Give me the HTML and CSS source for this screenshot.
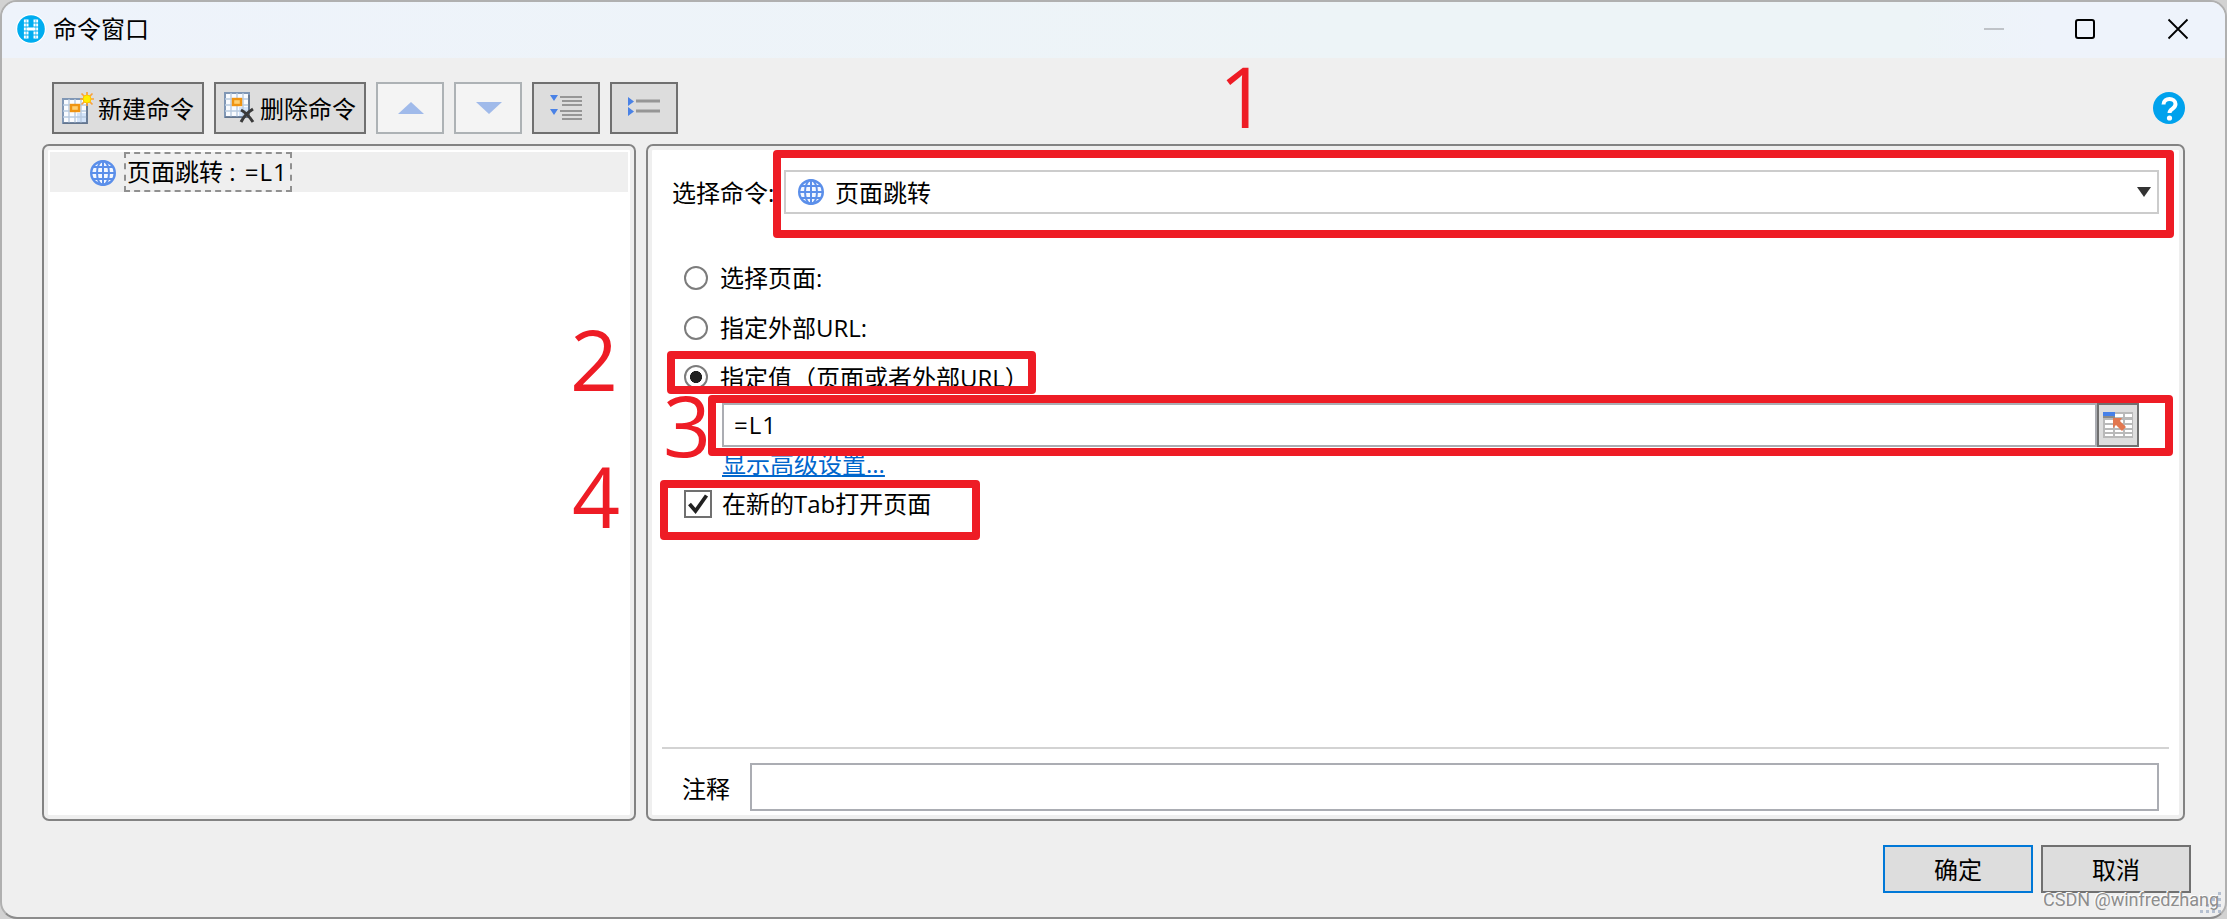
FILE: index.html
```html
<!DOCTYPE html>
<html lang="zh-CN">
<head>
  <meta charset="UTF-8">
  <meta name="viewport" content="width=device-width, initial-scale=1.0">
  <title>命令窗口</title>
  <link rel="stylesheet" href="styles.css">
</head>
<body>
  <!-- shared icon shapes -->
  <svg class="defs" width="0" height="0">
    <symbol id="globe" viewBox="0 0 28 28">
      <circle cx="14" cy="14" r="11.8" fill="#f4f8ff" stroke="#5b8fea" stroke-width="2.4"/>
      <g fill="none" stroke="#5b8fea" stroke-width="2">
        <ellipse cx="14" cy="14" rx="6" ry="12"/>
        <path d="M14 2v24M2 14h24M4 8h20M4 20h20"/>
      </g>
    </symbol>
    <symbol id="sheet" viewBox="0 0 26 26">
      <rect x="1" y="1" width="24" height="24" fill="#fafcff" stroke="#8097b5" stroke-width="2"/>
      <path d="M15 15h9v9h-9z" fill="#d3e4fa"/>
      <path d="M7 1v24M13 1v24M19 1v24M1 7h24M1 13h24M1 19h24" stroke="#b8cae0" stroke-width="1.4"/>
      <path d="M1 25.2h24V3" fill="none" stroke="#63758d" stroke-width="1.6"/>
      <rect x="9" y="7" width="8" height="6" fill="#ffcf70" stroke="#ef9412" stroke-width="2.4"/>
    </symbol>
  </svg>

  <div class="window">
    <div class="titlebar">
      <svg class="logo" width="30" height="30" viewBox="0 0 30 30">
        <circle cx="15" cy="15" r="15" fill="#fff"/>
        <circle cx="15" cy="15" r="13.8" fill="#00adf0"/>
        <path d="M10.2 5.500v19M19.8 5.500v19" stroke="#fff" stroke-width="4.6" stroke-dasharray="3 1"/>
        <path d="M12 15h6" stroke="#fff" stroke-width="3"/>
        <path d="M10.2 6v18M19.8 6v18" stroke="#00adf0" stroke-width=".6"/>
      </svg>
      <span class="title">命令窗口</span>
      <svg class="controls" width="206" height="24" viewBox="0 0 206 24" fill="none" stroke="#000" stroke-width="2">
        <path d="M0 12h20" stroke="#bfc3c8"/>
        <rect x="92" y="3" width="18" height="18" rx="2"/>
        <path d="M184.500 2.500l19 19M203.500 2.500l-19 19" stroke-width="1.8"/>
      </svg>
    </div>

    <div class="toolbar">
      <button class="tool text">
        <svg width="32" height="32" viewBox="0 0 32 32">
          <use href="#sheet" x="0" y="6" width="26" height="26"/>
          <g stroke="#f9a13a" stroke-width="1.7">
            <path d="M25 0v14M18 7h14M19.500 1.500l11 11M30.500 1.500l-11 11"/>
          </g>
          <circle cx="25" cy="7" r="4" fill="#ffef00" stroke="#ffc400"/>
        </svg>
        <span>新建命令</span>
      </button>
      <button class="tool text">
        <svg width="32" height="32" viewBox="0 0 32 32">
          <use href="#sheet" x="0" y="0" width="26" height="26"/>
          <path d="M17 18q6 3 12 12M29 17q-8 5-12 13" fill="none" stroke="#3a3a3a" stroke-width="3"/>
        </svg>
        <span>删除命令</span>
      </button>
      <button class="tool disabled">
        <svg width="32" height="32" viewBox="0 0 32 32"><path d="M4 22h26L17 10z" fill="#a0baea"/></svg>
      </button>
      <button class="tool disabled">
        <svg width="32" height="32" viewBox="0 0 32 32"><path d="M4 10h26L17 22z" fill="#a0baea"/></svg>
      </button>
      <button class="tool">
        <svg width="32" height="32" viewBox="0 0 32 32">
          <path d="M0 3h8l-4 6zM0 17h8l-4 6z" fill="#4a82e6"/>
          <path d="M10 5h22M12 9h20M12 13h20M10 19h22M12 23h20M12 27h20" stroke="#969696" stroke-width="2.2"/>
        </svg>
      </button>
      <button class="tool">
        <svg width="32" height="32" viewBox="0 0 32 32">
          <path d="M0 5l6 4.500L0 14zM0 15l6 4.500L0 24z" fill="#4a82e6"/>
          <path d="M8 9h24M8 19h24" stroke="#969696" stroke-width="2.8"/>
        </svg>
      </button>
      <svg class="help" width="32" height="32" viewBox="0 0 32 32">
        <circle cx="16" cy="16" r="16" fill="#00a2ed"/>
        <path d="M10.500 12.500c0-7.500 12-7 12-.5 0 5-6 4.500-6 9" fill="none" stroke="#fff" stroke-width="4"/>
        <circle cx="16.500" cy="26" r="2.600" fill="#fff"/>
      </svg>
    </div>

    <div class="main">
      <div class="panel list">
        <div class="list-row">
          <svg width="28" height="28"><use href="#globe"/></svg>
          <span class="item">页面跳转 : <span class="formula">=L1</span></span>
        </div>
      </div>

      <div class="panel detail">
        <div class="command">
          <span class="label">选择命令:</span>
          <div class="combo">
            <svg width="28" height="28"><use href="#globe"/></svg>
            <span>页面跳转</span>
            <svg class="arrow" width="14" height="10" viewBox="0 0 14 10"><path d="M0 0h14L7 10z" fill="#333"/></svg>
          </div>
        </div>

        <div class="options">
          <label class="option"><i class="radio"></i>选择页面:</label>
          <label class="option"><i class="radio"></i>指定外部URL:</label>
          <label class="option"><i class="radio checked"></i>指定值（页面或者外部URL）</label>
        </div>
        <div class="value">
          <div class="value-input"><span class="formula">=L1</span></div>
          <button class="picker">
            <svg width="30" height="26" viewBox="0 0 30 26">
              <rect width="30" height="26" fill="#b9b9b9"/>
              <path d="M2 8h8v3H2zM12 2h8v3h-8zM22 2h7v3h-7zM12 8h8v3h-8zM22 8h7v3h-7zM2 13h8v3H2zM12 13h8v3h-8zM22 13h7v3h-7zM2 18h8v2H2zM12 18h8v2h-8zM22 18h7v2h-7zM2 22h8v2H2zM12 22h8v2h-8zM22 22h7v2h-7z" fill="#fff"/>
              <path d="M0 0h12v4H0z" fill="#4680e8"/>
              <path d="M0 4h12v2H0z" fill="#8a8a8a"/>
              <path d="M10 6h9l-2 3 6 6-4 4-6-6-3 3z" fill="#e27850"/>
            </svg>
          </button>
        </div>
        <a class="advanced">显示高级设置...</a>
        <label class="newtab">
          <svg width="28" height="28" viewBox="0 0 28 28">
            <rect x="1" y="1" width="26" height="26" fill="#fff" stroke="#707070" stroke-width="2"/>
            <path d="M5.500 14l6 7L22.500 5.500" fill="none" stroke="#212121" stroke-width="3.800"/>
          </svg>
          在新的Tab打开页面
        </label>

        <div class="note">
          <span>注释</span>
          <div class="note-input"></div>
        </div>
      </div>
    </div>

    <div class="footer">
      <button class="btn primary">确定</button>
      <button class="btn">取消</button>
    </div>

    <svg class="grip" width="24" height="24" viewBox="0 0 24 24" fill="#b4bfd0">
      <path d="M19 1h3v3h-3zM13 7h3v3h-3zM19 7h3v3h-3zM7 13h3v3H7zM13 13h3v3h-3zM19 13h3v3h-3zM1 19h3v3H1zM7 19h3v3H7zM13 19h3v3h-3zM19 19h3v3h-3z"/>
    </svg>
  </div>

  <!-- step markers -->
  <span class="step step1">1</span>
  <span class="step step2">2</span>
  <span class="step step3">3</span>
  <span class="step step4">4</span>
  <div class="mark mark1"></div>
  <div class="mark mark2"></div>
  <div class="mark mark3"></div>
  <div class="mark mark4"></div>
  <span class="watermark">CSDN @winfredzhang</span>
</body>
</html>
```

FILE: styles.css
```css
* {
  box-sizing: border-box;
}
body {
  margin: 0;
  width: 2227px;
  height: 919px;
  position: relative;
  overflow: hidden;
  background: #d2d2d2;
  font-family: "Open Sans", "Noto Sans CJK SC", sans-serif;
  font-size: 24px;
  line-height: 32px;
  color: #000;
}
.defs {
  position: absolute;
}
svg {
  display: block;
  flex: none;
}
button {
  font: inherit;
  color: inherit;
  padding: 2px 0 0;
  border: 2px solid #707070;
  background: #ddd;
}
.window {
  height: 919px;
  display: flex;
  flex-direction: column;
  background: #efefef;
  border: 2px solid #b0b0b0;
  border-bottom-color: #8c8c8c;
  border-radius: 17px;
  overflow: hidden;
}

/* title bar */
.titlebar {
  height: 56px;
  flex: none;
  display: flex;
  align-items: center;
  padding: 0 35px 2px 14px;
  background: linear-gradient(90deg, #eef3fb, #edf4f7 60%, #edf4f7 86%, #eef3fb 92%);
}
.title {
  margin-left: 7px;
}
.controls {
  margin-left: auto;
}

/* toolbar */
.toolbar {
  display: flex;
  align-items: center;
  gap: 10px;
  padding: 24px 40px 10px 50px;
}
.tool {
  width: 68px;
  height: 52px;
  padding: 0;
  display: flex;
  align-items: center;
  justify-content: center;
}
.tool.text {
  width: 152px;
  justify-content: flex-start;
  padding-left: 8px;
  gap: 4px;
}
.tool span {
  padding-top: 1px;
}
.tool.disabled {
  background: #f4f4f4;
  border-color: #adb2b5;
}
.help {
  margin-left: auto;
}

/* panels */
.main {
  display: flex;
  gap: 10px;
  height: 677px;
  padding: 0 40px;
}
.panel {
  border: 2px solid #838383;
  border-radius: 7px;
  background: #fff;
  box-shadow: inset 0 0 0 4px #efefef;
  padding: 4px;
}
.list {
  width: 594px;
}
.list-row {
  height: 40px;
  margin: 2px;
  padding-left: 39px;
  display: flex;
  align-items: center;
  background: #efefef;
}
.list-row svg {
  margin-top: 2px;
}
.item {
  height: 40px;
  width: 168px;
  margin-left: 7px;
  padding: 2px 0 0 1px;
  border: 2px dashed #909090;
  white-space: nowrap;
}
.item .formula {
  margin-left: 3px;
}
.formula {
  letter-spacing: 1px;
}
.detail {
  flex: 1;
  display: flex;
  flex-direction: column;
}
.command {
  display: flex;
  align-items: center;
  margin: 20px 20px 0;
}
.label {
  width: 112px;
  flex: none;
  padding-top: 2px;
}
.combo {
  flex: 1;
  height: 44px;
  display: flex;
  align-items: center;
  border: 2px solid #ccc;
  padding: 0 6px 0 11px;
}
.combo span {
  margin-left: 10px;
  padding-top: 1px;
}
.arrow {
  margin-left: auto;
}
.options {
  margin: 39px 0 0 32px;
}
.option {
  height: 50px;
  display: flex;
  align-items: center;
}
.radio {
  width: 24px;
  height: 24px;
  margin-right: 12px;
  border: 2px solid #7c7c7c;
  border-radius: 50%;
}
.radio.checked {
  margin-top: -2px;
  background: radial-gradient(circle, #212121 5.7px, #fff 6.3px);
}
.value {
  display: flex;
  height: 44px;
  margin: 0 40px 0 70px;
}
.value-input {
  flex: 1;
  border: 2px solid #abadb3;
  padding: 4px 10px;
}
.picker {
  width: 42px;
  padding: 0 0 0 4px;
}
.advanced {
  align-self: flex-start;
  height: 36px;
  margin-left: 70px;
  line-height: 33px;
  color: #0066cc;
  text-decoration: underline;
}
.newtab {
  display: flex;
  align-items: center;
  gap: 10px;
  height: 28px;
  margin: 7px 0 0 32px;
}
.note {
  display: flex;
  align-items: center;
  margin: auto 10px 0;
  padding: 14px 10px 4px 20px;
  border-top: 2px solid #d3d3d3;
}
.note span {
  padding-top: 3px;
}
.note-input {
  flex: 1;
  height: 48px;
  margin-left: 20px;
  border: 2px solid #abadb3;
}

/* dialog buttons */
.footer {
  display: flex;
  justify-content: flex-end;
  gap: 8px;
  padding: 24px 34px 0 0;
}
.btn {
  width: 150px;
  height: 48px;
}
.btn.primary {
  border-color: #0078d7;
}
.grip {
  position: absolute;
  right: 4px;
  bottom: 4px;
}

/* step markers laid over the window */
.mark {
  position: absolute;
  border: 8px solid #ee1c25;
  border-radius: 4px;
}
.mark1 {
  left: 773px;
  top: 150px;
  width: 1401px;
  height: 88px;
}
.mark2 {
  left: 667px;
  top: 351px;
  width: 369px;
  height: 43px;
}
.mark3 {
  left: 708px;
  top: 395px;
  width: 1465px;
  height: 61px;
}
.mark4 {
  left: 660px;
  top: 480px;
  width: 320px;
  height: 60px;
}
.step {
  position: absolute;
  font-size: 84px;
  line-height: 84px;
  color: #ee1c25;
}
.step1 {
  left: 1219px;
  top: 54px;
}
.step2 {
  left: 570px;
  top: 317px;
}
.step3 {
  left: 663px;
  top: 383px;
}
.step4 {
  left: 572px;
  top: 454px;
}
.watermark {
  position: absolute;
  left: 2043px;
  top: 884px;
  font-family: Roboto, "Liberation Sans", sans-serif;
  font-size: 18px;
  white-space: nowrap;
  color: #8d8d8d;
  text-shadow: -1px -1px 0 #fff;
}
```
